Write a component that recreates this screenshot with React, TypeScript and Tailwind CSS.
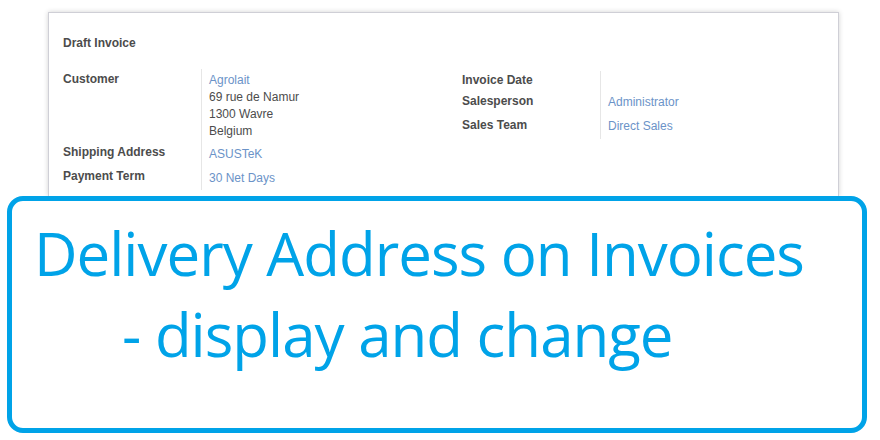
import React from 'react';

const Label: React.FC<{ children?: React.ReactNode; className?: string }> = ({ children, className = '' }) => (
  <div className={`font-bold text-[#4c4c4c] ${className}`}>{children}</div>
);

const Value: React.FC<{ children?: React.ReactNode; className?: string }> = ({ children, className = '' }) => (
  <div className={`border-l border-[#e6e6e6] pl-[7px] ${className}`}>{children}</div>
);

export default function App() {
  return (
    <div className="h-[440px] w-[880px] overflow-hidden bg-white">
      {/* Form sheet */}
      <div
        className="ml-[48px] mt-[12px] h-[184px] w-[791px] border border-b-0 border-[#cfcfd6] bg-white pl-[14px] pt-[22px] text-[12px] leading-[17px] shadow-[0_0_5px_rgba(0,0,0,0.18)]"
        style={{ fontFamily: '"Liberation Sans", Arial, sans-serif' }}
      >
        <div className="font-bold text-[#4c4c4c]">Draft Invoice</div>

        <div className="mt-[17px] flex">
          {/* Left group */}
          <div className="grid w-[399px] grid-cols-[138px_1fr] content-start">
            <Label className="pt-[2px]">Customer</Label>
            <Value className="pt-[3px] text-[#4c4c4c]">
              <div className="text-[#6b93c8]">Agrolait</div>
              <div>69 rue de Namur</div>
              <div>1300 Wavre</div>
              <div>Belgium</div>
            </Value>
            <Label className="pt-[4px]">Shipping Address</Label>
            <Value className="pt-[6px] text-[#6b93c8]">ASUSTeK</Value>
            <Label className="pt-[5px]">Payment Term</Label>
            <Value className="pb-[3px] pt-[7px] text-[#6b93c8]">30 Net Days</Value>
          </div>

          {/* Right group */}
          <div className="mt-[2px] grid grid-cols-[138px_200px] content-start">
            <Label className="pt-[1px]">Invoice Date</Label>
            <Value className="pt-[1px]">&nbsp;</Value>
            <Label className="pt-[4px]">Salesperson</Label>
            <Value className="pt-[5px] text-[#6b93c8]">Administrator</Value>
            <Label className="pt-[6px]">Sales Team</Label>
            <Value className="pb-[4px] pt-[7px] text-[#6b93c8]">Direct Sales</Value>
          </div>
        </div>
      </div>

      {/* Title overlay */}
      <div
        className="relative ml-[7px] h-[237px] w-[860px] rounded-[16px] border-[5px] border-[#00a3e8] bg-white pt-[12px] text-[60px] leading-[81px] tracking-[-1px] text-[#00a3e8]"
        style={{ fontFamily: '"Open Sans", "Noto Sans", sans-serif' }}
      >
        <div className="pl-[22px]">Delivery Address on Invoices</div>
        <div className="pl-[110px]">- display and change</div>
      </div>
    </div>
  );
}
